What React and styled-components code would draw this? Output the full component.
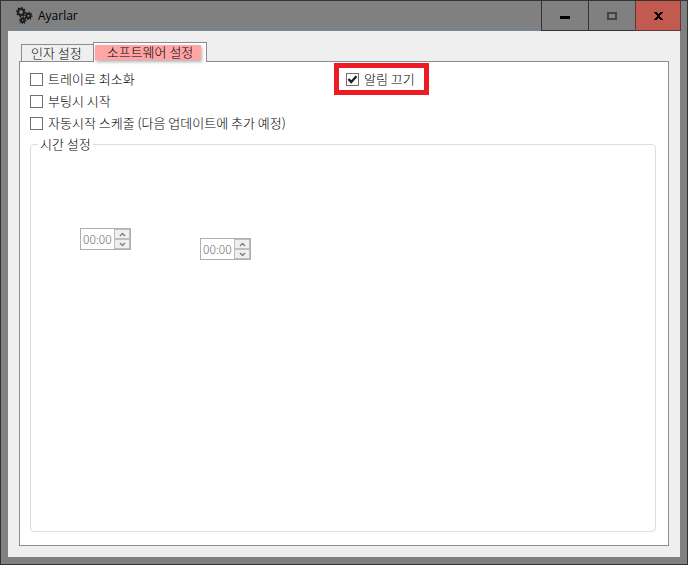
import React from 'react';
import styled, { createGlobalStyle } from 'styled-components';

const GlobalStyle = createGlobalStyle`
  *, *::before, *::after {
    box-sizing: border-box;
  }

  body {
    margin: 0;
    color: #000;
    font-family: "Noto Sans CJK KR", sans-serif;
    font-size: 13px;
    font-weight: 300;
    line-height: 16px;
  }

  button, input {
    font: inherit;
    color: inherit;
  }
`;

const Window = styled.div`
  display: flex;
  flex-direction: column;
  min-height: 100vh;
  padding: 0 7px 6px;
  background: #808080;
  border: 1px solid #333337;
`;

const TitleBar = styled.header`
  display: flex;
  justify-content: space-between;
  height: 30px;
`;

const Title = styled.h1`
  display: flex;
  flex: 1;
  align-items: center;
  gap: 5px;
  margin: 0;
  padding-left: 8px;
  border-bottom: 1px solid #71879b;
  font-family: "Open Sans", sans-serif;
  font-size: 12px;
  font-weight: 400;
`;

const WindowButtons = styled.div`
  display: flex;
  margin-right: -1px;
`;

const WindowButton = styled.button`
  display: flex;
  align-items: center;
  justify-content: center;
  width: ${({ $close }) => ($close ? '46px' : '47px')};
  padding: 0;
  background: ${({ $close }) => ($close ? '#c35a50' : '#808080')};
  border: solid ${({ $close }) => ($close ? '#5c3a39' : '#333337')};
  border-width: 0 ${({ $close }) => ($close ? '1px' : '0')} 1px 1px;
`;

const Content = styled.main`
  display: flex;
  flex: 1;
  flex-direction: column;
  padding: 11px;
  background: #efefef;
  border-bottom: 1px solid #71858b;
`;

const TabList = styled.div`
  display: flex;
  align-items: flex-end;
  height: 19px;
  padding-left: 2px;
`;

const Tab = styled.button`
  display: flex;
  height: ${({ $active }) => ($active ? '20px' : '17px')};
  margin: ${({ $active }) => ($active ? '0 0 -1px -1px' : '0')};
  padding: ${({ $active }) => ($active ? '2px 5px 0 1px' : '0 11px 0 9px')};
  background: ${({ $active }) => ($active ? '#fff' : '#efefef')};
  border: 1px solid #898c95;
  border-bottom: 0;
  z-index: ${({ $active }) => ($active ? 1 : 0)};
`;

const Highlight = styled.span`
  height: 15px;
  padding: 0 8px 0 12px;
  background: #ffa5a5;
  box-shadow: 1px 2px 3px rgba(0, 0, 0, 0.3);
  line-height: 14px;
`;

const Panel = styled.section`
  display: flex;
  flex: 1;
  flex-direction: column;
  padding: 6px 12px 13px 10px;
  background: #fff;
  border: 1px solid #898c95;
`;

const Options = styled.div`
  display: grid;
  grid-template-columns: 309px 1fr;
  grid-auto-rows: 22px;
  justify-items: start;
`;

const OptionLabel = styled.label`
  display: flex;
  grid-column: ${({ $marked }) => ($marked ? 2 : 1)};
  align-items: center;
  gap: 5px;
  padding: ${({ $marked }) => ($marked ? '0 9px 0 7px' : '0')};
  outline: ${({ $marked }) => ($marked ? '5px solid #ed1c24' : 'none')};
  white-space: nowrap;
`;

const CheckBox = styled.span`
  display: grid;
  width: 13px;
  height: 13px;

  input, svg {
    grid-area: 1 / 1;
    width: 13px;
    height: 13px;
    margin: 0;
  }

  input {
    appearance: none;
    background: #fff;
    border: 1px solid #707070;
  }

  svg {
    pointer-events: none;
    visibility: hidden;
  }

  input:checked + svg {
    visibility: visible;
  }
`;

const Group = styled.fieldset`
  flex: 1;
  min-width: 0;
  margin: 0;
  padding: 0 7px;
  border: 1px solid #d5dfe5;
  border-radius: 4px;
`;

const Legend = styled.legend`
  padding: 0 2px;
  line-height: 20px;
`;

const Times = styled.div`
  display: flex;
  gap: 69px;
  height: 32px;
  margin: 74px 42px 0;
`;

const Spinner = styled.div`
  display: flex;
  align-self: ${({ $end }) => ($end ? 'flex-end' : 'flex-start')};
  width: 51px;
  height: 22px;
  background: #fff;
  border: 1px solid #abb0b0;
`;

const TimeInput = styled.input`
  flex: 1;
  min-width: 0;
  padding: 0 0 0 2px;
  background: transparent;
  border: 0;
  color: #6d6d6d;
  font-size: 12px;
`;

const Steps = styled.div`
  display: flex;
  flex-direction: column;
  width: 16px;
`;

const Step = styled.button`
  display: flex;
  flex: 1;
  align-items: center;
  justify-content: center;
  padding: 0;
  background: #efefef;
  border: 1px solid #bfbfbf;
`;

const Gear = ({ x, y, r }) => (
  <g fill="none" stroke="#1c1c1c">
    <circle cx={x} cy={y} r={r} strokeWidth="2" />
    <circle cx={x} cy={y} r={r + 1.4} strokeWidth="1.4" pathLength="16" strokeDasharray="1 1" />
  </g>
);

const GearsIcon = () => (
  <svg width="17" height="17" viewBox="0 0 17 17" aria-hidden="true">
    <Gear x={5} y={5} r={2.9} />
    <Gear x={12.4} y={8.8} r={2.1} />
    <Gear x={6.8} y={13.2} r={1.7} />
  </svg>
);

const Option = ({ label, marked, checked }) => (
  <OptionLabel $marked={marked}>
    <CheckBox>
      <input type="checkbox" defaultChecked={checked} />
      <svg viewBox="0 0 13 13" aria-hidden="true">
        <path d="M2.5 6 5.2 9 10.5 3.2" fill="none" stroke="#212121" strokeWidth="2.4" />
      </svg>
    </CheckBox>
    {label}
  </OptionLabel>
);

const TimeSpinner = ({ label, end }) => (
  <Spinner $end={end}>
    <TimeInput aria-label={label} defaultValue="00:00" disabled />
    <Steps>
      <Step aria-label="+" disabled>
        <svg width="7" height="5" viewBox="0 0 7 5">
          <path d="M1 4 3.5 1.5 6 4" fill="none" stroke="#838383" strokeWidth="1.5" />
        </svg>
      </Step>
      <Step aria-label="-" disabled>
        <svg width="7" height="5" viewBox="0 0 7 5">
          <path d="M1 1 3.5 3.5 6 1" fill="none" stroke="#838383" strokeWidth="1.5" />
        </svg>
      </Step>
    </Steps>
  </Spinner>
);

const App = () => {
  return (
    <>
      <GlobalStyle />
      <Window>
        <TitleBar>
          <Title>
            <GearsIcon />
            Ayarlar
          </Title>
          <WindowButtons>
            <WindowButton aria-label="Minimize">
              <svg width="10" height="10" viewBox="0 0 10 10">
                <path d="M0 5h10v3H0z" />
              </svg>
            </WindowButton>
            <WindowButton aria-label="Maximize" disabled>
              <svg width="10" height="8" viewBox="0 0 10 8">
                <path d="M1 1h8v6H1z" fill="none" stroke="#444" strokeWidth="2" />
              </svg>
            </WindowButton>
            <WindowButton aria-label="Close" $close>
              <svg width="9" height="8" viewBox="0 0 9 8">
                <path d="M0 0h3v1h1v1h1V1h1V0h3v1H8v1H7v1H6v2h1v1h1v1h1v1H6V7H5V6H4v1H3v1H0V7h1V6h1V5h1V3H2V2H1V1H0z" />
              </svg>
            </WindowButton>
          </WindowButtons>
        </TitleBar>
        <Content>
          <TabList role="tablist">
            <Tab role="tab" aria-selected="false">인자 설정</Tab>
            <Tab role="tab" aria-selected="true" $active>
              <Highlight>소프트웨어 설정</Highlight>
            </Tab>
          </TabList>
          <Panel role="tabpanel">
            <Options>
              <Option label="트레이로 최소화" />
              <Option label="알림 끄기" marked checked />
              <Option label="부팅시 시작" />
              <Option label="자동시작 스케줄 (다음 업데이트에 추가 예정)" />
            </Options>
            <Group>
              <Legend>시간 설정</Legend>
              <Times>
                <TimeSpinner label="시작" />
                <TimeSpinner label="종료" end />
              </Times>
            </Group>
          </Panel>
        </Content>
      </Window>
    </>
  );
};

export default App;
